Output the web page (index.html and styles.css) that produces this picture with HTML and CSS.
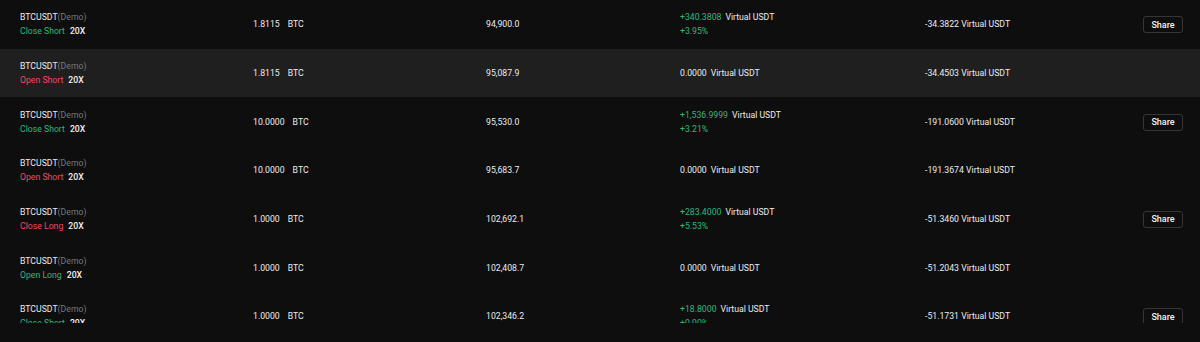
FILE: index.html
```html
<!DOCTYPE html>
<html>
<head>
<meta charset="utf-8">
<link rel="stylesheet" href="styles.css">
</head>
<body>
<div class="table">
  <div class="row">
    <div class="c name"><div><span class="sym">BTCUSDT</span><span class="demo">(Demo)</span></div><div><span class="green">Close Short</span><span class="lev">20X</span></div></div>
    <div class="c qty"><span>1.8115</span><span class="unit">BTC</span></div>
    <div class="c price">94,900.0</div>
    <div class="c pnl"><div><span class="green">+340.3808</span><span class="unit">Virtual USDT</span></div><div class="green">+3.95%</div></div>
    <div class="c fee">-34.3822 Virtual USDT</div>
    <div class="c act"><button class="share">Share</button></div>
  </div>
  <div class="row hl">
    <div class="c name"><div><span class="sym">BTCUSDT</span><span class="demo">(Demo)</span></div><div><span class="red">Open Short</span><span class="lev">20X</span></div></div>
    <div class="c qty"><span>1.8115</span><span class="unit">BTC</span></div>
    <div class="c price">95,087.9</div>
    <div class="c pnl"><div><span>0.0000</span><span class="unit">Virtual USDT</span></div></div>
    <div class="c fee">-34.4503 Virtual USDT</div>
    <div class="c act"></div>
  </div>
  <div class="row">
    <div class="c name"><div><span class="sym">BTCUSDT</span><span class="demo">(Demo)</span></div><div><span class="green">Close Short</span><span class="lev">20X</span></div></div>
    <div class="c qty"><span>10.0000</span><span class="unit">BTC</span></div>
    <div class="c price">95,530.0</div>
    <div class="c pnl"><div><span class="green">+1,536.9999</span><span class="unit">Virtual USDT</span></div><div class="green">+3.21%</div></div>
    <div class="c fee">-191.0600 Virtual USDT</div>
    <div class="c act"><button class="share">Share</button></div>
  </div>
  <div class="row">
    <div class="c name"><div><span class="sym">BTCUSDT</span><span class="demo">(Demo)</span></div><div><span class="red">Open Short</span><span class="lev">20X</span></div></div>
    <div class="c qty"><span>10.0000</span><span class="unit">BTC</span></div>
    <div class="c price">95,683.7</div>
    <div class="c pnl"><div><span>0.0000</span><span class="unit">Virtual USDT</span></div></div>
    <div class="c fee">-191.3674 Virtual USDT</div>
    <div class="c act"></div>
  </div>
  <div class="row">
    <div class="c name"><div><span class="sym">BTCUSDT</span><span class="demo">(Demo)</span></div><div><span class="red">Close Long</span><span class="lev">20X</span></div></div>
    <div class="c qty"><span>1.0000</span><span class="unit">BTC</span></div>
    <div class="c price">102,692.1</div>
    <div class="c pnl"><div><span class="green">+283.4000</span><span class="unit">Virtual USDT</span></div><div class="green">+5.53%</div></div>
    <div class="c fee">-51.3460 Virtual USDT</div>
    <div class="c act"><button class="share">Share</button></div>
  </div>
  <div class="row">
    <div class="c name"><div><span class="sym">BTCUSDT</span><span class="demo">(Demo)</span></div><div><span class="green">Open Long</span><span class="lev">20X</span></div></div>
    <div class="c qty"><span>1.0000</span><span class="unit">BTC</span></div>
    <div class="c price">102,408.7</div>
    <div class="c pnl"><div><span>0.0000</span><span class="unit">Virtual USDT</span></div></div>
    <div class="c fee">-51.2043 Virtual USDT</div>
    <div class="c act"></div>
  </div>
  <div class="row">
    <div class="c name"><div><span class="sym">BTCUSDT</span><span class="demo">(Demo)</span></div><div><span class="green">Close Short</span><span class="lev">20X</span></div></div>
    <div class="c qty"><span>1.0000</span><span class="unit">BTC</span></div>
    <div class="c price">102,346.2</div>
    <div class="c pnl"><div><span class="green">+18.8000</span><span class="unit">Virtual USDT</span></div><div class="green">+0.90%</div></div>
    <div class="c fee">-51.1731 Virtual USDT</div>
    <div class="c act"><button class="share">Share</button></div>
  </div>
</div>
</body>
</html>
```

FILE: styles.css
```css
html, body {
  margin: 0;
  padding: 0;
  background: #0e0e0e;
}
body {
  font-family: Roboto, "Noto Sans", sans-serif;
  font-size: 8.7px;
  color: #ececec;
  height: 342px;
  overflow: hidden;
}
.table {
  height: 323px;
  overflow: hidden;
}
.row {
  display: grid;
  grid-template-columns: 233px 233px 194px 245px 1fr 80px;
  align-items: center;
  height: 48.67px;
  padding-left: 20px;
  box-sizing: border-box;
}
.row.hl {
  background: #1f1f1f;
}
.c {
  display: flex;
  flex-direction: column;
  justify-content: center;
  gap: 4px;
  line-height: 10px;
}
.qty, .price, .fee {
  flex-direction: row;
  justify-content: flex-start;
}
.name .sym { color: #ececec; }
.demo { color: #777777; }
.green { color: #2db67c; }
.red { color: #f2495f; }
.lev { margin-left: 5px; color: #f2f2f2; font-weight: 500; }
.unit { margin-left: 4px; }
.act {
  flex-direction: row;
  justify-content: flex-end;
  padding-right: 17px;
}
.share {
  width: 40px;
  height: 17px;
  margin-top: 1px;
  background: transparent;
  border: 1px solid #363636;
  border-radius: 3px;
  color: #f2f2f2;
  font-family: Roboto, "Noto Sans", sans-serif;
  font-size: 9px;
  font-weight: 500;
  padding: 0;
}
```
